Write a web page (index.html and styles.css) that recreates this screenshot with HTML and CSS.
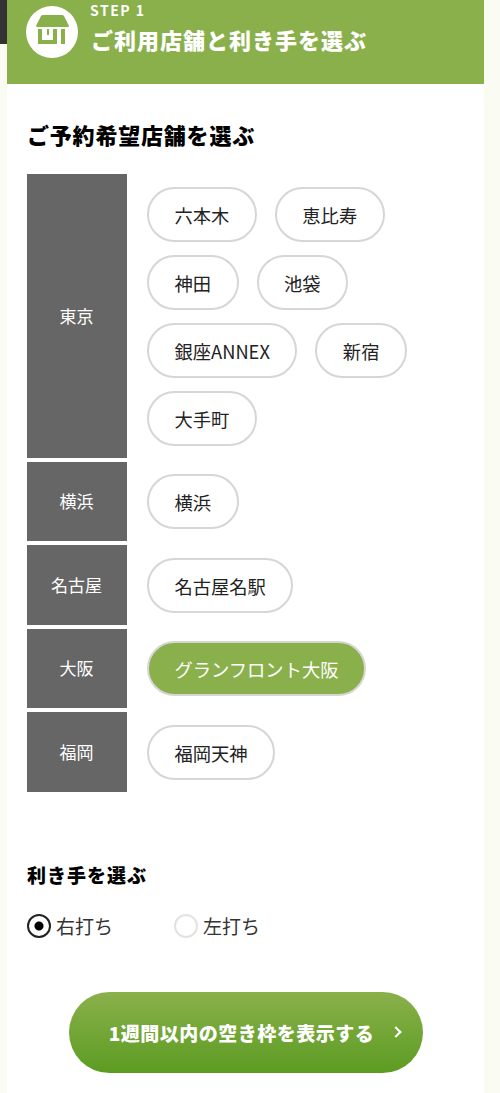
FILE: index.html
```html
<!DOCTYPE html>
<html lang="ja">
<head>
  <meta charset="UTF-8">
  <title>ご利用店舗と利き手を選ぶ</title>
  <link rel="stylesheet" href="styles.css">
</head>
<body>
  <div class="side-tab"></div>
  <div class="panel">
    <div class="step-head">
      <span class="step-icon">
        <svg viewBox="0 0 52 52" width="52" height="52">
          <path d="M10 20 L15 10 Q15.500 9 17 9 L36 9 Q37.500 9 38 10 L43 20 Q43 21 42 21 L11 21 Q10 21 10 20 Z" fill="#8ab04b"/>
          <path d="M12 23 H16 V34 H27 V23 H31 V38 H12 Z" fill="#8ab04b"/>
          <rect x="21" y="23" width="2" height="6" fill="#8ab04b"/>
          <rect x="35" y="23" width="4" height="15" fill="#8ab04b"/>
        </svg>
      </span>
      <div class="step-text">
        <p class="step-no">STEP 1</p>
        <h1 class="step-title">ご利用店舗と利き手を選ぶ</h1>
      </div>
    </div>

    <h2 class="shop-title">ご予約希望店舗を選ぶ</h2>
    <div class="shops">
      <div class="area">
        <div class="area-name">東京</div>
        <div class="pills">
          <a class="pill" href="#">六本木</a>
          <a class="pill" href="#">恵比寿</a>
          <a class="pill" href="#">神田</a>
          <a class="pill" href="#">池袋</a>
          <a class="pill" href="#">銀座ANNEX</a>
          <a class="pill" href="#">新宿</a>
          <a class="pill" href="#">大手町</a>
        </div>
      </div>
      <div class="area">
        <div class="area-name">横浜</div>
        <div class="pills"><a class="pill" href="#">横浜</a></div>
      </div>
      <div class="area">
        <div class="area-name">名古屋</div>
        <div class="pills"><a class="pill" href="#">名古屋名駅</a></div>
      </div>
      <div class="area">
        <div class="area-name">大阪</div>
        <div class="pills"><a class="pill selected" href="#">グランフロント大阪</a></div>
      </div>
      <div class="area">
        <div class="area-name">福岡</div>
        <div class="pills"><a class="pill" href="#">福岡天神</a></div>
      </div>
    </div>

    <h2 class="hand-title">利き手を選ぶ</h2>
    <div class="hands">
      <label class="hand"><span class="radio checked"></span>右打ち</label>
      <label class="hand"><span class="radio"></span>左打ち</label>
    </div>

    <a class="submit" href="#">1週間以内の空き枠を表示する<span class="arrow"></span></a>
  </div>
</body>
</html>
```

FILE: styles.css
```css
* {
  margin: 0;
  padding: 0;
  box-sizing: border-box;
}

html, body {
  height: 1093px;
  overflow: hidden;
}

body {
  background: #fafbf3;
  font-family: "Noto Sans CJK JP", "Noto Sans", sans-serif;
  color: #222;
}

a {
  text-decoration: none;
  color: inherit;
}

.side-tab {
  position: absolute;
  left: 0;
  top: 0;
  width: 7px;
  height: 44px;
  background: #333;
}

.panel {
  width: 477px;
  height: 1093px;
  margin-left: 7px;
  background: #fff;
}

.step-head {
  display: flex;
  height: 84px;
  padding: 6px 0 0 19px;
  background: #8ab04b;
  color: #fff;
}

.step-icon {
  width: 52px;
  height: 52px;
  border-radius: 50%;
  background: #fff;
}

.step-icon svg {
  display: block;
}

.step-text {
  margin: -6px 0 0 12px;
}

.step-no {
  font-size: 14px;
  font-weight: bold;
  line-height: 20px;
  letter-spacing: 1.5px;
}

.step-title {
  margin: 4px 0 0 1px;
  font-size: 22px;
  font-weight: 900;
  line-height: 30px;
  letter-spacing: 1px;
}

.shop-title {
  margin: 35px 0 0 20px;
  font-size: 22px;
  font-weight: 900;
  line-height: 30px;
  letter-spacing: 0.8px;
  color: #000;
}

.shops {
  display: flex;
  flex-direction: column;
  gap: 4px;
  margin: 25px 0 0 20px;
}

.area {
  display: flex;
  min-height: 79.5px;
}

.area-name {
  display: flex;
  align-items: center;
  justify-content: center;
  flex: 0 0 100px;
  padding: 0 1px 1px 0;
  background: #666;
  color: #fff;
  font-size: 17px;
}

.pills {
  display: flex;
  flex-wrap: wrap;
  align-content: center;
  gap: 13px 18px;
  width: 320px;
  padding: 12.75px 0 11.75px 20px;
}

.pill {
  display: block;
  height: 55px;
  padding: 0 25.5px;
  border: 2px solid #d6d6d6;
  border-radius: 28px;
  background: #fff;
  font-size: 18.3px;
  line-height: 52px;
}

.pill.selected {
  background: #8ab04b;
  color: #fff;
}

.hand-title {
  margin: 69px 0 0 20px;
  font-size: 19px;
  font-weight: 900;
  line-height: 28px;
  letter-spacing: 1px;
  color: #000;
}

.hands {
  display: flex;
  margin: 23px 0 0 20px;
}

.hand {
  display: flex;
  align-items: center;
  width: 147px;
  font-size: 19px;
  line-height: 28px;
  color: #333;
}

.radio {
  width: 24px;
  height: 24px;
  margin-right: 5px;
  border: 2px solid #e2e2e2;
  border-radius: 50%;
  background: #fff;
}

.radio.checked {
  border-color: #222;
  background: radial-gradient(circle, #000 0 4px, #fff 5px);
}

.submit {
  display: flex;
  align-items: center;
  justify-content: center;
  width: 354px;
  height: 81px;
  margin: 52px 0 0 62px;
  padding-left: 17px;
  border-radius: 41px;
  background: linear-gradient(#8ab04b, #5c9c22);
  color: #fff;
  font-size: 19px;
  font-weight: 900;
  letter-spacing: 0.5px;
}

.arrow {
  width: 8px;
  height: 8px;
  margin-left: 18px;
  border-top: 2px solid #fff;
  border-right: 2px solid #fff;
  transform: rotate(45deg);
}
```
